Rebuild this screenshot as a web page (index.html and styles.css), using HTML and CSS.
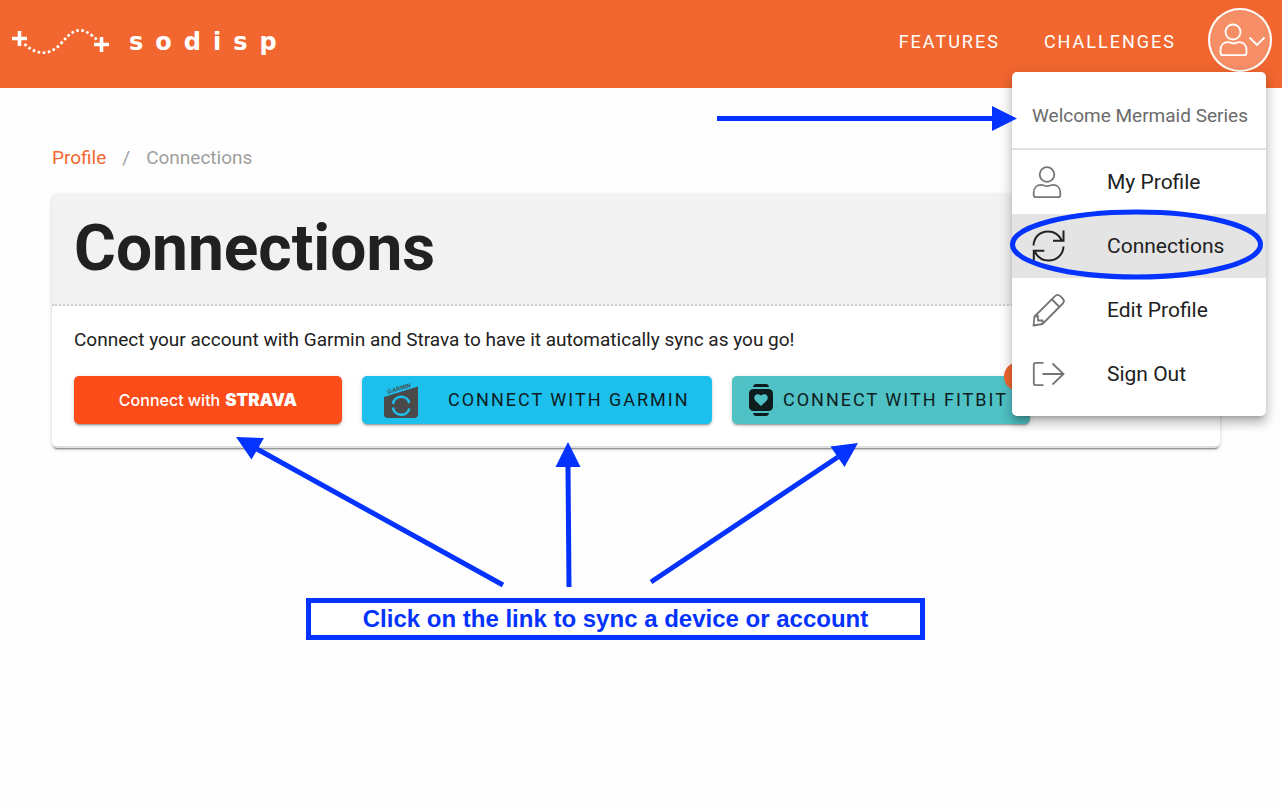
FILE: index.html
```html
<!DOCTYPE html>
<html lang="en">
<head>
<meta charset="utf-8">
<meta name="viewport" content="width=device-width, initial-scale=1">
<title>Connections</title>
<link rel="stylesheet" href="styles.css">
</head>
<body>
<header class="topbar">
  <a class="brand" href="#">
    <svg class="brand-mark" width="98" height="32" viewBox="0 0 98 32" aria-hidden="true">
      <path d="M0 12.500h15M7.500 5v15M82 18.500h15M89.500 11v15" stroke="#fff" stroke-width="3.600" fill="none"/>
      <path d="M12.500 18C23 28 36 31 48 18.500C58 7.500 65 -2 80 9.500C82 11 83.500 12.500 85 14" stroke="#fff" stroke-width="2.700" stroke-dasharray="2.700 2.450" fill="none"/>
    </svg>
    <span class="brand-name">sodisp</span>
  </a>
  <nav class="topnav">
    <a href="#">Features</a>
    <a href="#">Challenges</a>
  </nav>
  <div class="account">
    <button class="avatar" type="button" aria-label="Account menu" aria-expanded="true">
      <svg width="64" height="64" viewBox="0 0 64 64" fill="none" stroke="#fff" stroke-width="1.800" aria-hidden="true">
        <circle cx="25" cy="24" r="7.500"/>
        <path d="M15 47.200h21c1.700 0 2.500-.8 2.500-2.500v-2.500c0-5-3-8-7.500-8-2.500 0-3.500 1.200-5.500 1.200s-3-1.200-5.500-1.200c-4.500 0-7.500 3-7.500 8v2.500c0 1.700.8 2.500 2.500 2.500z"/>
        <path d="M41.500 29.500l7.500 7.500 7.500-7.500"/>
      </svg>
    </button>
    <div class="menu">
      <p class="menu-title">Welcome Mermaid Series</p>
      <a class="menu-item" href="#">
        <svg width="36" height="36" viewBox="0 0 36 36" fill="none" stroke="#757575" stroke-width="1.800" aria-hidden="true">
          <circle cx="16" cy="10.500" r="7.300"/>
          <path d="M5 33.200h22c1.600 0 2.300-.7 2.300-2.200v-2.300c0-4.800-3-7.800-7.300-7.800-2.500 0-3.500 1.200-6 1.200s-3.500-1.200-6-1.200c-4.300 0-7.300 3-7.300 7.800V31c0 1.500.7 2.200 2.300 2.200z"/>
        </svg>
        <span>My Profile</span>
      </a>
      <a class="menu-item active" href="#" aria-current="page">
        <svg width="36" height="36" viewBox="0 0 36 36" fill="none" stroke="#212121" stroke-width="2" aria-hidden="true">
          <path d="M2.500 17.500C3 9 9 3.500 17 3.500c6 0 11 3 14 9.300"/>
          <path d="M32.500 2.500v10.300H22"/>
          <path d="M32.500 18.500c-.5 8.500-7 14-15 14-6 0-11-3-14-9.500"/>
          <path d="M2.800 33V22.800h10.500"/>
        </svg>
        <span>Connections</span>
      </a>
      <a class="menu-item" href="#">
        <svg width="36" height="36" viewBox="0 0 36 36" fill="none" stroke="#757575" stroke-width="1.800" stroke-linejoin="round" aria-hidden="true">
          <path d="M2.500 33.500l1-9L24 4.200c1.800-1.800 3.500-1.800 5.300 0l2.500 2.500c1.500 1.600 1.500 3.200 0 4.800L11.500 32z"/>
          <path d="M21 7.500l7.500 7.500M3.500 24.500l3.500-.5v4.500h4.700L11.500 32"/>
        </svg>
        <span>Edit Profile</span>
      </a>
      <a class="menu-item" href="#">
        <svg width="36" height="36" viewBox="0 0 36 36" fill="none" stroke="#757575" stroke-width="1.800" aria-hidden="true">
          <path d="M12.500 6.900H4.400c-1 0-1.600.6-1.600 1.600v19c0 1 .6 1.600 1.600 1.600h8.100M11.500 18H32M21.500 7.500L32.500 18l-11 10.500"/>
        </svg>
        <span>Sign Out</span>
      </a>
    </div>
  </div>
</header>

<main class="page">
  <nav class="crumbs" aria-label="Breadcrumb">
    <a href="#">Profile</a>
    <span>/</span>
    <span>Connections</span>
  </nav>
  <section class="card">
    <div class="card-head"><h1>Connections</h1></div>
    <div class="card-body">
      <p>Connect your account with Garmin and Strava to have it automatically sync as you go!</p>
      <div class="actions">
        <button class="btn strava" type="button">Connect with <b>STRAVA</b></button>
        <button class="btn garmin" type="button">
          <svg width="36" height="40" viewBox="0 0 36 40" aria-hidden="true">
            <path d="M0 17L34 6.500V34q0 4-4 4H4q-4 0-4-4z" fill="#4a4a4a"/>
            <path d="M9 24a8.300 8.300 0 0 1 16.300-1M9 27.500a8.300 8.300 0 0 0 16.300 1" fill="none" stroke="#1dbfec" stroke-width="2.500"/>
            <text class="garmin-word" x="4" y="14" transform="rotate(-17 4 14)">GARMIN</text>
          </svg>
          <span>Connect with Garmin</span>
        </button>
        <button class="btn fitbit" type="button">
          <svg width="24" height="32" viewBox="0 0 24 32" aria-hidden="true">
            <path d="M4 3Q4.500 0 7 0h10q2.500 0 3 3zM4 29Q4.500 32 7 32h10q2.500 0 3-3z" fill="#0d1d1e"/>
            <rect y="5" width="24" height="22" rx="4.500" fill="#0d1d1e"/>
            <path d="M12 22l-5.500-5.300c-3.500-3.500.8-9.200 5.500-5.200 4.700-4 9 1.700 5.500 5.200z" fill="#50c1c5"/>
          </svg>
          <span>Connect with Fitbit</span>
          <i class="badge"></i>
        </button>
      </div>
    </div>
  </section>
</main>

<svg class="annotations" width="1282" height="660" viewBox="0 0 1282 660" fill="none" stroke="#0433ff" stroke-width="5" aria-hidden="true">
  <path d="M717 118.500H994M503 585L257 449M569 587L568 465M651 582L838 457"/>
  <ellipse cx="1136.500" cy="244.500" rx="124" ry="32.500"/>
  <path d="M1017 118.500l-25-12.500v25zM236 437l28 1-12.500 21.500zM568 442l12.500 25h-25zM858 443l-13.500 24-14-20.500z" fill="#0433ff" stroke="none"/>
</svg>
<p class="callout">Click on the link to sync a device or account</p>
</body>
</html>
```
FILE: styles.css
```css
* { box-sizing: border-box; }
body {
  margin: 0;
  min-height: 100vh;
  position: relative;
  background: #fefefe;
  color: #212121;
  font: 19px/24px Roboto, sans-serif;
}
p, h1 { margin: 0; }
a { color: inherit; text-decoration: none; }
svg { display: block; flex: none; }
button { font: inherit; color: inherit; border: 0; cursor: pointer; }

.topbar {
  display: flex;
  height: 88px;
  padding: 8px 10px 12px 12px;
  background: #f2672f;
  color: #fff;
}
.brand { display: flex; align-items: center; gap: 19px; height: 68px; margin-right: auto; }
.brand-name {
  font: 700 24px/32px "DejaVu Sans", sans-serif;
  letter-spacing: 12px;
}
.topnav {
  display: flex;
  align-items: center;
  gap: 44px;
  height: 68px;
  padding-right: 32px;
  font-size: 18px;
  text-transform: uppercase;
  letter-spacing: 2px;
}
.account { position: relative; }
.avatar {
  display: block;
  width: 64px;
  height: 64px;
  padding: 0;
  border-radius: 50%;
  background: #f78f66;
  box-shadow: inset 0 0 0 2px #fff;
}
.menu {
  position: absolute;
  z-index: 2;
  top: 64px;
  right: 6px;
  width: 254px;
  padding-bottom: 10px;
  border-radius: 5px;
  overflow: hidden;
  background: #fff;
  color: #212121;
  box-shadow: 0 5px 5px -3px rgba(0,0,0,.2), 0 8px 10px 1px rgba(0,0,0,.14), 0 3px 14px 2px rgba(0,0,0,.12);
}
.menu-title {
  padding: 32px 20px 20px;
  border-bottom: 2px solid #e0e0e0;
  color: #6b6b6b;
  white-space: nowrap;
}
.menu-item {
  display: flex;
  align-items: center;
  gap: 40px;
  height: 64px;
  padding: 0 19px;
  font-size: 21px;
}
.menu-item.active { background: #e4e4e4; }

.page { padding: 58px 62px 0 52px; }
.crumbs { display: flex; gap: 16px; color: #9e9e9e; }
.crumbs a { color: #f2672f; }
.card {
  margin-top: 24px;
  border-bottom: 2px solid #e0e0e0;
  border-radius: 5px;
  background: #fff;
  box-shadow: 0 3px 1px -2px rgba(0,0,0,.3), 0 2px 2px 0 rgba(0,0,0,.14), 0 1px 5px 0 rgba(0,0,0,.12);
}
.card-head {
  padding: 20px 22px;
  border-bottom: 2px dotted #d0d0d0;
  border-radius: 5px 5px 0 0;
  background: #f2f2f2;
}
h1 { font-size: 64px; line-height: 70px; }
.card-body { padding: 22px; }
.actions { display: flex; flex-wrap: wrap; gap: 20px; margin-top: 24px; }
.btn {
  position: relative;
  display: flex;
  align-items: center;
  height: 48px;
  padding: 0 22px;
  border-radius: 5px;
  white-space: nowrap;
  box-shadow: 0 3px 1px -2px rgba(0,0,0,.2), 0 2px 2px 0 rgba(0,0,0,.14), 0 1px 5px 0 rgba(0,0,0,.12);
}
.strava {
  width: 268px;
  justify-content: center;
  gap: 5px;
  background: #fc4c1a;
  color: #fff;
  font: 500 16px/24px Inter, sans-serif;
}
.strava b { font-weight: 900; font-size: 17px; }
.garmin, .fitbit {
  color: #0d1d1e;
  font-size: 18px;
  text-transform: uppercase;
  letter-spacing: 2px;
}
.garmin { gap: 28px; width: 350px; background: #1dbfec; }
.fitbit { gap: 10px; width: 298px; padding: 0 17px; background: #50c1c5; }
.garmin-word { font: italic 700 6px "Liberation Sans", sans-serif; letter-spacing: 0; fill: #4a4a4a; }
.badge {
  position: absolute;
  top: -14px;
  right: -3px;
  width: 29px;
  height: 29px;
  border-radius: 50%;
  background: #f2672f;
}
.annotations { position: absolute; z-index: 3; top: 0; left: 0; pointer-events: none; }
.callout {
  position: absolute;
  z-index: 3;
  top: 598px;
  left: 306px;
  width: 619px;
  padding: 2px;
  border: 5px solid #0433ff;
  background: #fff;
  color: #0433ff;
  font: 700 24px/28px "Liberation Sans", sans-serif;
  text-align: center;
}
```
